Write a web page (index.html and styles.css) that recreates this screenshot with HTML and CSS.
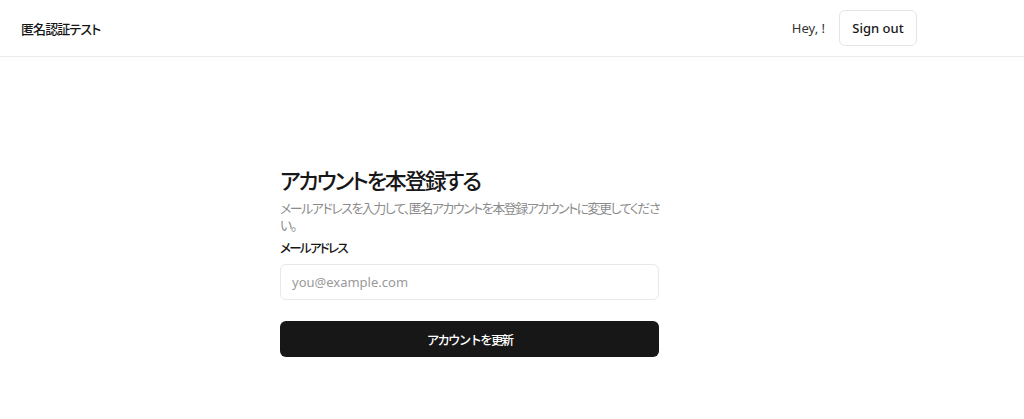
FILE: index.html
```html
<!DOCTYPE html>
<html lang="ja">
<head>
<meta charset="utf-8">
<title>匿名認証テスト</title>
<link rel="stylesheet" href="styles.css">
</head>
<body>
<header class="nav">
  <div class="brand">匿名認証テスト</div>
  <div class="nav-right">
    <span class="hey">Hey, !</span>
    <button class="btn-outline">Sign out</button>
  </div>
</header>
<main class="main">
  <form class="form">
    <h1 class="title">アカウントを本登録する</h1>
    <p class="desc">メールアドレスを入力して、匿名アカウントを本登録アカウントに変更してください。</p>
    <label class="label" for="email">メールアドレス</label>
    <input class="input" id="email" type="email" placeholder="you@example.com">
    <button class="btn-primary" type="button">アカウントを更新</button>
  </form>
</main>
</body>
</html>
```
FILE: styles.css
```css
* { box-sizing: border-box; }
html, body { margin: 0; padding: 0; background: #fff; }
body {
  font-family: "Noto Sans", "Noto Sans CJK JP", sans-serif;
  color: #171717;
  font-feature-settings: "palt";
}
.nav {
  height: 57px;
  border-bottom: 1px solid #ebebeb;
  display: flex;
  align-items: center;
  justify-content: space-between;
  padding: 0 107px 0 21px;
}
.brand {
  font-size: 13px;
  font-weight: 500;
  letter-spacing: -0.9px;
}
.nav-right {
  display: flex;
  align-items: center;
  gap: 14px;
}
.hey {
  font-size: 13px;
  color: #333;
}
.btn-outline {
  font-family: inherit;
  height: 36px;
  width: 78px;
  border: 1px solid #e5e5e5;
  border-radius: 6px;
  background: #fff;
  font-size: 13px;
  font-weight: 500;
  color: #171717;
  padding: 0;
}
.main {
  padding: 108px 0 0 280px;
}
.form {
  width: 379px;
  display: flex;
  flex-direction: column;
}
.title {
  margin: 0;
  font-size: 22px;
  line-height: 30px;
  font-weight: 500;
  letter-spacing: -2.1px;
}
.desc {
  margin: 5px 0 0;
  font-size: 13px;
  line-height: 17px;
  color: #8c8c8c;
  letter-spacing: -1.5px;
}
.label {
  margin-top: 6px;
  font-size: 12.5px;
  line-height: 18px;
  font-weight: 500;
  letter-spacing: -1.7px;
}
.input {
  margin-top: 6px;
  height: 36px;
  border: 1px solid #e8e8e8;
  border-radius: 6px;
  padding: 0 11px;
  font-family: inherit;
  font-size: 13px;
  outline: none;
}
.input::placeholder { color: #9a9a9a; }
.btn-primary {
  margin-top: 21px;
  height: 36px;
  border: none;
  border-radius: 6px;
  background: #171717;
  color: #fff;
  font-family: inherit;
  font-size: 12.5px;
  font-weight: 500;
  letter-spacing: -1.8px;
}
```
